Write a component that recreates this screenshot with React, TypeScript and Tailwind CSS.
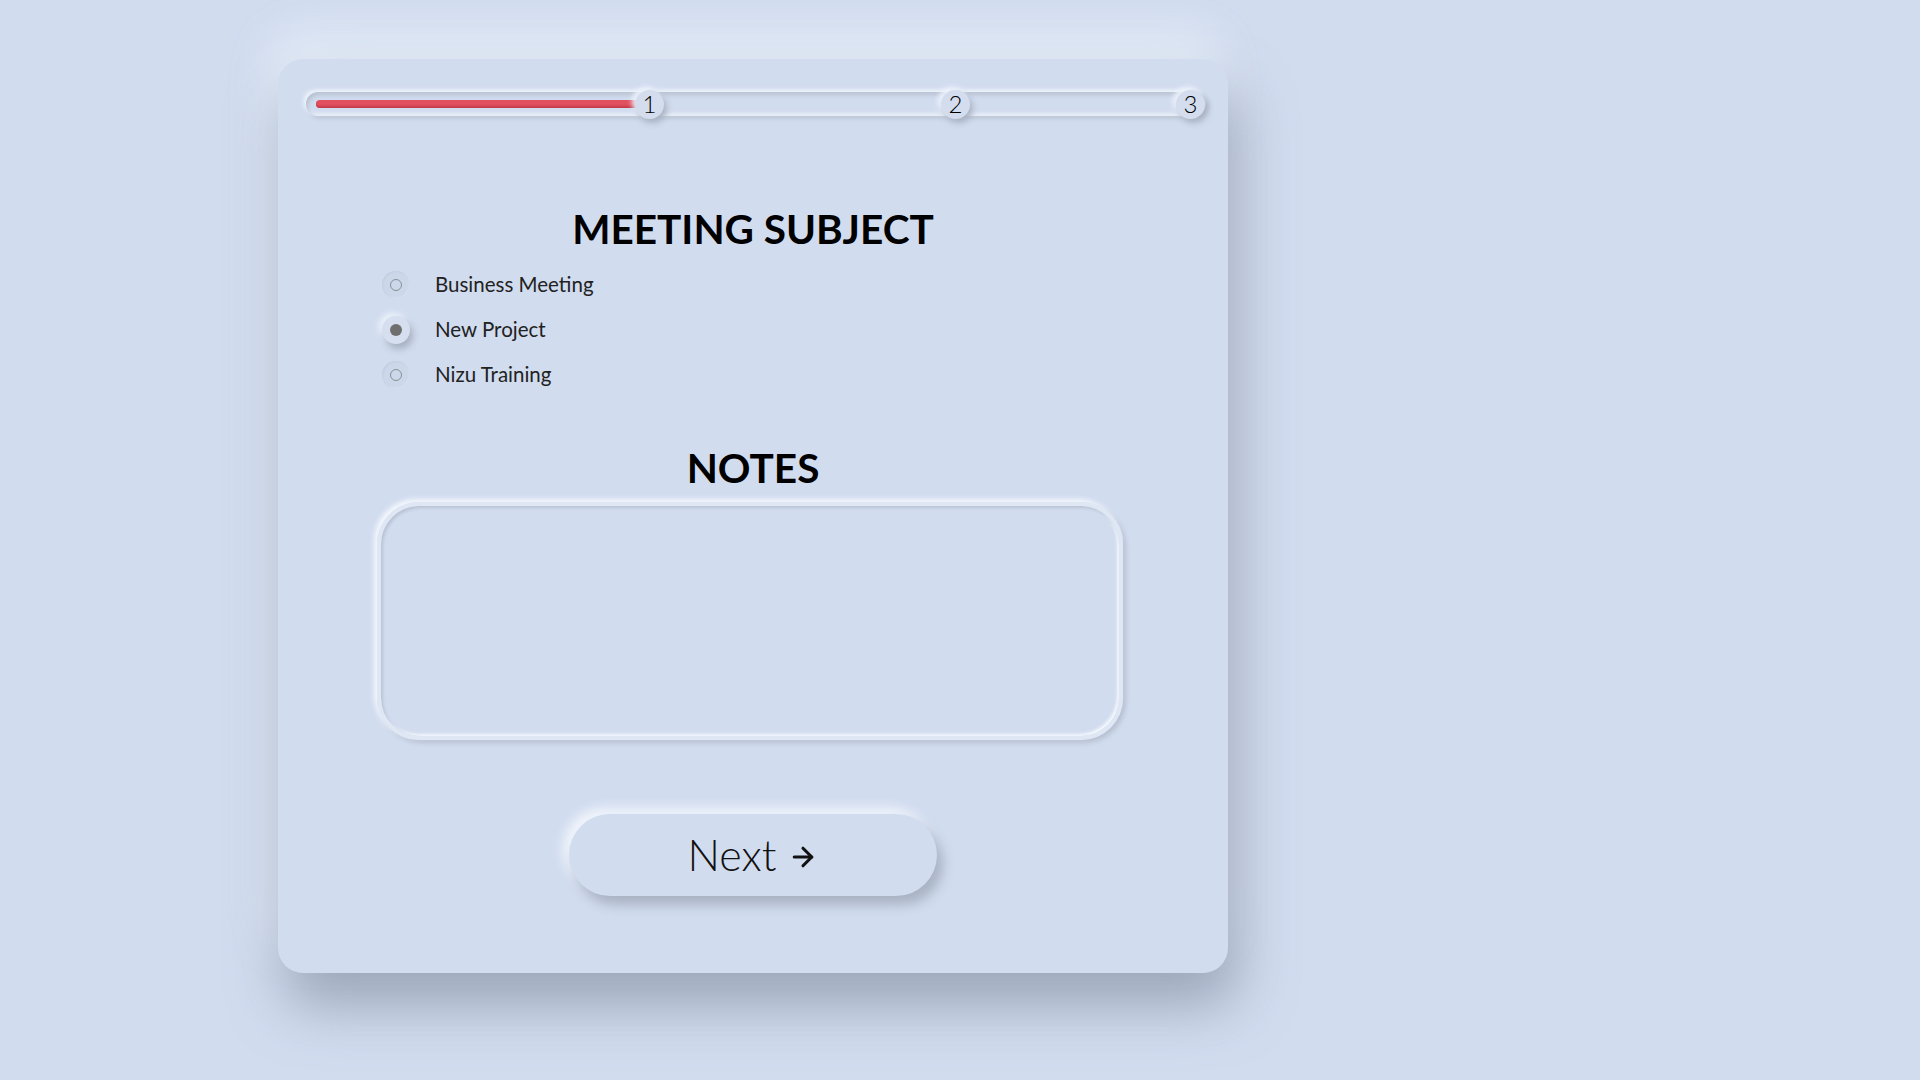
import { ArrowRight } from "lucide-react"

const subjects = [
  { label: "Business Meeting", checked: false },
  { label: "New Project", checked: true },
  { label: "Nizu Training", checked: false },
]

// thumb centres measured from the left edge of the track
const steps = [
  { n: 1, left: 343 },
  { n: 2, left: 649 },
  { n: 3, left: 884 },
]

function Progress() {
  return (
    <div className="relative ml-[28px] mr-[22px] mt-[33px] h-[24px]">
      <div className="h-full rounded-full bg-[#d1dcef] shadow-[-2px_-2px_4px_#f4f8fe,2px_2px_4px_#b3bdcd,inset_2px_3px_4px_#b8c2d2,inset_-2px_-2px_4px_#f2f6fc]" />
      <div className="absolute left-[10px] top-[8px] h-[8px] w-[325px] rounded-full bg-[#e1505f] shadow-[inset_0_-2px_2px_#c73d4c]" />
      {steps.map((s) => (
        <div
          key={s.n}
          className="absolute top-[-2px] flex h-[29px] w-[29px] items-center justify-center rounded-full bg-[#d3ddee] pb-[1px] text-[24px] font-light text-black shadow-[3px_4px_6px_#a9b3c3,-3px_-3px_5px_#eef3fb]"
          style={{ left: s.left - 14 }}
        >
          {s.n}
        </div>
      ))}
    </div>
  )
}

function Radio({ label, checked }: { label: string; checked: boolean }) {
  return (
    <div className="flex h-[45px] items-center">
      <div
        className={
          checked
            ? "flex h-[28px] w-[28px] items-center justify-center rounded-full bg-[#d5dff0] shadow-[3px_5px_7px_#a6b0c0,-3px_-3px_6px_#eef3fb]"
            : "flex h-[28px] w-[28px] items-center justify-center rounded-full bg-[#ccd7e9] shadow-[inset_1px_1px_2px_#c3cde0,inset_-1px_-1px_2px_#d8e2f2]"
        }
      >
        {checked ? (
          <div className="h-[12px] w-[12px] rounded-full bg-[#6f6f6f]" />
        ) : (
          <div className="h-[12px] w-[12px] rounded-full border border-[#8a8f96]" />
        )}
      </div>
      <span className="ml-[25px] text-[20.5px] font-normal text-[#222]">{label}</span>
    </div>
  )
}

export default function App() {
  return (
    <div className="min-h-screen bg-[#d1dcef] pl-[278px] pt-[59px] font-['Lato','Noto_Sans',sans-serif]">
      <div className="flex h-[914px] w-[950px] flex-col rounded-[25px] bg-[#d1dcef] shadow-[8px_32px_55px_rgba(120,130,150,0.6),-8px_-24px_45px_rgba(232,240,250,0.9)]">
        <Progress />

        <h2 className="mt-[87px] text-center text-[40.5px] leading-[52px] font-bold text-black">
          MEETING SUBJECT
        </h2>

        <div className="ml-[104px] mt-[7px] flex flex-col">
          {subjects.map((s) => (
            <Radio key={s.label} label={s.label} checked={s.checked} />
          ))}
        </div>

        <h2 className="mt-[45px] text-center text-[40.5px] leading-[52px] font-bold text-black">NOTES</h2>

        <div className="ml-[99px] mt-[8px] h-[238px] w-[746px] rounded-[42px] border-[4px] border-[#dfe7f5] shadow-[-3px_-3px_5px_#f5f8fd,3px_3px_5px_#b6c0d0,inset_2px_2px_3px_#b9c3d3,inset_-2px_-2px_3px_#f5f8fd]">
          <textarea className="h-full w-full resize-none rounded-[38px] bg-transparent px-8 py-6 text-[20px] outline-none" />
        </div>

        <div className="mt-[74px] flex justify-center">
          <button className="flex h-[82px] w-[368px] items-center justify-center gap-3 rounded-full bg-[#d1dcef] text-[43px] font-light text-[#111] shadow-[6px_9px_12px_#a9b3c3,-6px_-6px_12px_#f2f6fc]">
            Next
            <ArrowRight size={30} strokeWidth={2.5} className="mt-1" />
          </button>
        </div>
      </div>
    </div>
  )
}
